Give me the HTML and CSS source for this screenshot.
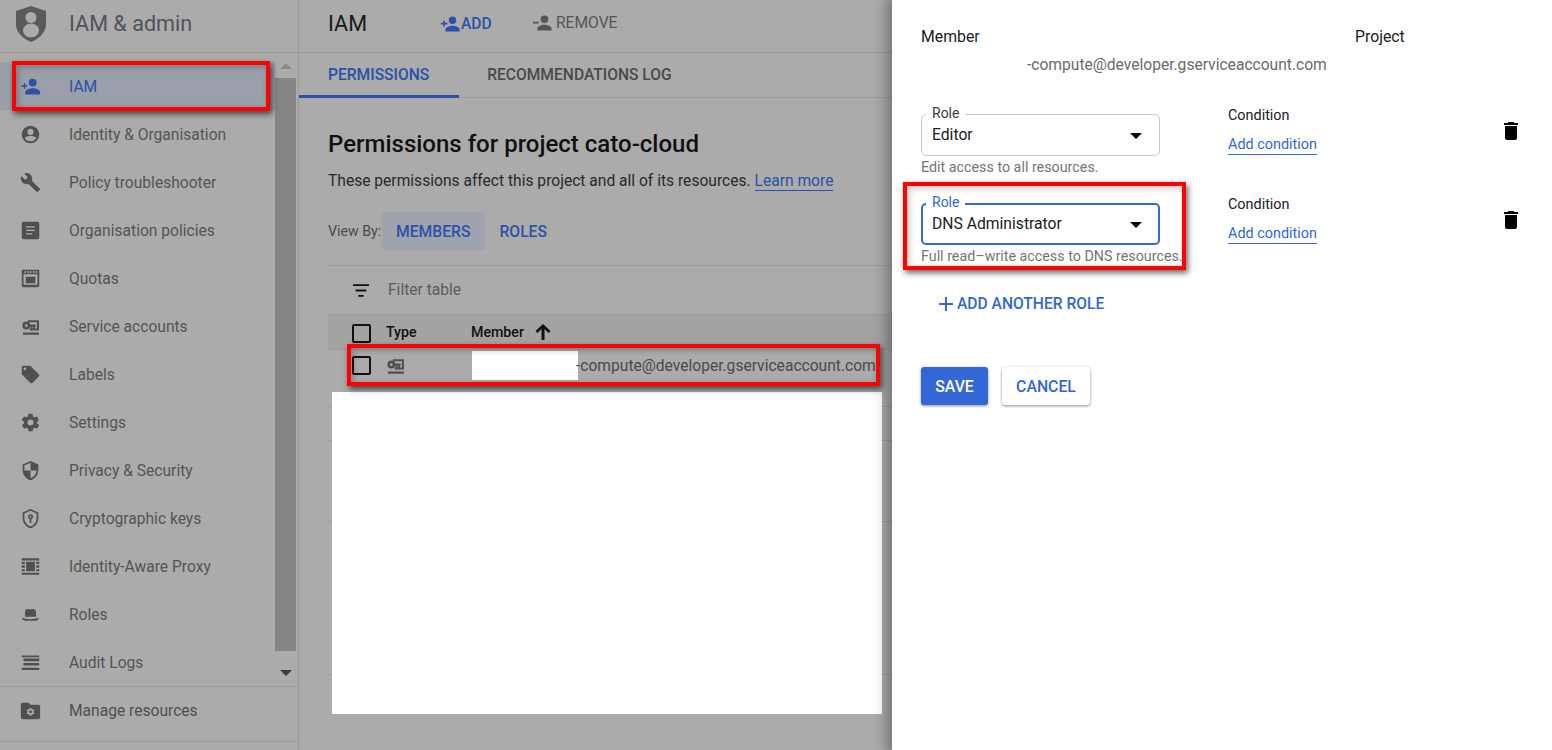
FILE: index.html
```html
<!DOCTYPE html>
<html>
<head>
<meta charset="UTF-8">
<title>IAM &amp; admin</title>
<link rel="stylesheet" href="styles.css">
</head>
<body>
<div class="app">

<!-- left nav -->
<aside class="sidebar">
	<div class="brand">
		<svg class="brand-logo" viewBox="0 0 30 36"><path fill="#5a5a5a" d="M15 0l15 5v13c0 8-6 14-15 18C6 32 0 26 0 18V5z"/><circle cx="15" cy="11.500" r="5.500" fill="#ababab"/><ellipse cx="15" cy="24.500" rx="8" ry="7" fill="#ababab"/></svg>
		<span class="brand-name">IAM &amp; admin</span>
	</div>
	<div class="nav-wrap">
		<ul class="nav">
			<li class="nav-item selected"><svg class="icon" viewBox="0 0 24 24"><path d="M14.500 12a4.500 4.500 0 1 0 0-9 4.500 4.500 0 0 0 0 9zM6 10.500V8H4.300v2.500H1.500v1.700h2.800v2.400H6v-2.400h2.300v-1.700zM14.500 14c-3 0-8.500 1.500-8.500 4.500V21h17v-2.500c0-3-5.500-4.500-8.500-4.500z"/></svg>IAM</li>
			<li class="nav-item"><svg class="icon" viewBox="0 0 24 24"><path d="M12 2a10 10 0 1 0 0 20 10 10 0 0 0 0-20zm0 3.500a3.500 3.500 0 1 1 0 7 3.500 3.500 0 0 1 0-7zm0 14.300c-2.600 0-4.900-1.300-6.300-3.300.1-2 4.200-3.100 6.300-3.100s6.200 1.100 6.300 3.100c-1.400 2-3.700 3.300-6.300 3.300z"/></svg>Identity &amp; Organisation</li>
			<li class="nav-item"><svg class="icon" viewBox="0 0 24 24"><path d="M22.700 19l-9.100-9.100c.9-2.300.4-5-1.500-6.900-2-2-5-2.400-7.400-1.300L9 6 6 9 1.600 4.700C.4 7.100.9 10.100 2.900 12.100c1.900 1.900 4.600 2.400 6.900 1.500l9.100 9.100c.4.400 1 .4 1.400 0l2.300-2.300c.5-.4.5-1.100.1-1.400z"/></svg>Policy troubleshooter</li>
			<li class="nav-item"><svg class="icon" viewBox="0 0 24 24"><path fill-rule="evenodd" d="M4 2h16a2 2 0 0 1 2 2v16a2 2 0 0 1-2 2H4a2 2 0 0 1-2-2V4a2 2 0 0 1 2-2zm3 5v1.500h10V7zm0 4v1.500h10V11zm0 4v1.500h7V15z"/></svg>Organisation policies</li>
			<li class="nav-item"><svg class="icon" viewBox="0 0 24 24"><path fill-rule="evenodd" d="M2 2h20v18a2 2 0 0 1-2 2H4a2 2 0 0 1-2-2zM4 7h16v11a1 1 0 0 1-1 1H5a1 1 0 0 1-1-1zM6.500 10h11v7.500h-11zM5 3.500h1.500V6H5zM8.500 3.500H10V6H8.500zM11.500 3.500H13V6h-1.500zM15 3.500h1.500V6H15zM18 3.500h1.500V6H18z"/></svg>Quotas</li>
			<li class="nav-item"><svg class="icon" viewBox="0 0 24 24"><path d="M7.200 6.400a4.500 4.500 0 1 1 0 9 4.500 4.500 0 1 1 0-9zM7.200 9.300a1.600 1.600 0 1 0 0 3.200 1.600 1.600 0 1 0 0-3.200zM9 4.800h12.700v11.900H11v-2.400h8.300V7.200H9zM11 9.800h7v2.400h-.8v2h-2.200v-2h-.8v2H12v-2h-1zM3.400 18.800h18.300v2.500H3.400z"/></svg>Service accounts</li>
			<li class="nav-item"><svg class="icon" viewBox="0 0 24 24"><path d="M21.400 11.600l-9-9C12 2.200 11.500 2 11 2H4a2 2 0 0 0-2 2v7c0 .6.200 1.100.6 1.400l9 9c.4.400.9.600 1.400.6s1-.2 1.400-.6l7-7c.4-.4.6-.9.600-1.400s-.2-1-.6-1.400zM5.500 7a1.500 1.500 0 1 1 0-3 1.500 1.500 0 0 1 0 3z"/></svg>Labels</li>
			<li class="nav-item"><svg class="icon" viewBox="0 0 24 24"><path d="M19.400 13c0-.3.100-.6.100-1s0-.7-.1-1l2.100-1.600c.2-.2.200-.4.100-.6l-2-3.500c-.1-.2-.4-.3-.6-.2l-2.500 1c-.5-.4-1.100-.7-1.700-1l-.4-2.600c0-.3-.2-.5-.5-.5h-4c-.3 0-.5.200-.5.400l-.4 2.700c-.6.200-1.100.6-1.700 1l-2.500-1c-.2-.1-.5 0-.6.200l-2 3.500c-.1.200-.1.400.1.600L4.600 11c0 .3-.1.700-.1 1s0 .7.100 1l-2.100 1.600c-.2.200-.2.400-.1.600l2 3.500c.1.200.4.300.6.200l2.500-1c.5.400 1.100.7 1.700 1l.4 2.600c0 .3.200.5.500.5h4c.3 0 .5-.2.500-.4l.4-2.700c.6-.2 1.100-.6 1.700-1l2.500 1c.2.100.5 0 .6-.2l2-3.500c.1-.2.100-.4-.1-.6zM12 15.500a3.500 3.500 0 1 1 0-7 3.500 3.500 0 0 1 0 7z"/></svg>Settings</li>
			<li class="nav-item"><svg class="icon" viewBox="0 0 24 24"><path d="M12 1L3 5v6c0 5.600 3.800 10.700 9 12 5.200-1.300 9-6.400 9-12V5zm0 11h7c-.5 4.100-3.300 7.800-7 8.900V12H5V6.300l7-3.100z"/></svg>Privacy &amp; Security</li>
			<li class="nav-item"><svg class="icon" viewBox="0 0 24 24"><path fill-rule="evenodd" d="M12 1L3 5v6c0 5.600 3.800 10.700 9 12 5.200-1.300 9-6.400 9-12V5zm0 2.200L19 6.300V11c0 4.500-3 8.800-7 9.900-4-1.100-7-5.400-7-9.900V6.300zM12 7a3 3 0 0 0-1 5.800V17h2v-4.200A3 3 0 0 0 12 7zm0 2a1 1 0 1 1 0 2 1 1 0 0 1 0-2z"/></svg>Cryptographic keys</li>
			<li class="nav-item"><svg class="icon" viewBox="0 0 24 24"><path d="M2 2.500h20v2.500H2zM2 6.500h3.500v2.500H2zM18.500 6.500H22v2.500h-3.500zM2 10.500h3.500v3H2zM18.500 10.500H22v3h-3.500zM2 15h3.500v2.500H2zM18.500 15H22v2.500h-3.500zM2 19h20v2.500H2zM7 6.500h10v11H7z"/></svg>Identity-Aware Proxy</li>
			<li class="nav-item"><svg class="icon" viewBox="0 0 24 24"><path d="M5.700 9c0-2.500 2-3.800 4-3.300.8.200 1.500.5 2.300.5s1.500-.3 2.300-.5c2-.5 4 .8 4 3.300v5.500H5.700zM2.500 15.500c2.500 1.300 5.500 1.800 9.500 1.800s7-.5 9.500-1.800c0 2.500-1.500 3.500-3.500 3.500H6c-2 0-3.500-1-3.500-3.500z"/></svg>Roles</li>
			<li class="nav-item"><svg class="icon" viewBox="0 0 24 24"><path d="M2 4h20v2H2zM4 7.500h18v3H4zM4 12.500h18v3H4zM2 18h20v2.500H2z"/></svg>Audit Logs</li>
		</ul>
		<div class="scrollbar">
			<span class="arrow-up"></span>
			<div class="thumb"></div>
			<span class="arrow-down"></span>
		</div>
	</div>
	<div class="manage">
		<svg class="icon" viewBox="0 0 24 24"><path d="M10 3H3a2 2 0 0 0-2 2v15a2 2 0 0 0 2 2h18a2 2 0 0 0 2-2V7.500a2 2 0 0 0-2-2H12z"/><path class="knock" transform="translate(6.700 8.200) scale(.44)" d="M19.400 13c0-.3.100-.6.100-1s0-.7-.1-1l2.100-1.600c.2-.2.200-.4.100-.6l-2-3.500c-.1-.2-.4-.3-.6-.2l-2.500 1c-.5-.4-1.100-.7-1.700-1l-.4-2.600c0-.3-.2-.5-.5-.5h-4c-.3 0-.5.200-.5.400l-.4 2.700c-.6.200-1.100.6-1.700 1l-2.500-1c-.2-.1-.5 0-.6.200l-2 3.500c-.1.200-.1.400.1.600L4.600 11c0 .3-.1.700-.1 1s0 .7.100 1l-2.100 1.600c-.2.200-.2.400-.1.600l2 3.500c.1.200.4.300.6.200l2.500-1c.5.400 1.100.7 1.700 1l.4 2.600c0 .3.200.5.500.5h4c.3 0 .5-.2.500-.4l.4-2.700c.6-.2 1.100-.6 1.700-1l2.500 1c.2.100.5 0 .6-.2l2-3.500c.1-.2.100-.4-.1-.6z"/><circle cx="12" cy="13.500" r="1.600"/></svg>Manage resources
	</div>
</aside>

<!-- project permissions -->
<main class="main">
	<div class="toolbar">
		<h1 class="page-title">IAM</h1>
		<a class="tool tool-add"><svg class="tool-icon" viewBox="0 0 24 24"><path d="M15 12a4.500 4.500 0 1 0 0-9 4.500 4.500 0 0 0 0 9zM6 10.500V8H4v2.500H1v2h3V15h2v-2.500h3v-2zM15 14c-3 0-8.500 1.500-8.500 4.500V21h17v-2.500C23.500 15.500 18 14 15 14z"/></svg>ADD</a>
		<a class="tool tool-remove"><svg class="tool-icon" viewBox="0 0 24 24"><path d="M15 12a4.500 4.500 0 1 0 0-9 4.500 4.500 0 0 0 0 9zM1 10.500h7v2H1zM15 14c-3 0-8.500 1.500-8.500 4.500V21h17v-2.500C23.500 15.500 18 14 15 14z"/></svg>REMOVE</a>
	</div>
	<div class="tabs">
		<a class="tab active">PERMISSIONS</a>
		<a class="tab">RECOMMENDATIONS LOG</a>
	</div>
	<div class="content">
		<h2 class="heading">Permissions for project cato-cloud</h2>
		<p class="intro">These permissions affect this project and all of its resources. <a class="link">Learn more</a></p>
		<div class="view-by">
			<span class="view-label">View By:</span>
			<a class="view-btn on">MEMBERS</a>
			<a class="view-btn">ROLES</a>
		</div>
		<div class="table">
			<div class="filter-row">
				<svg class="filter-icon" viewBox="0 0 18 14"><path d="M0 0h18v2H0zM3 6h12v2H3zM6 12h6v2H6z"/></svg>
				<span class="filter-text">Filter table</span>
			</div>
			<div class="table-head">
				<span class="check"></span>
				<span class="col-type">Type</span>
				<span class="col-member">Member</span>
				<svg class="sort-icon" viewBox="0 0 16 16"><path d="M6.500 16V5L2.500 9 .500 7 8 0l7.500 7-2 2-4-4v11z"/></svg>
			</div>
			<div class="table-row">
				<span class="check"></span>
				<svg class="type-icon" viewBox="0 0 24 24"><path d="M7.200 6.400a4.500 4.500 0 1 1 0 9 4.500 4.500 0 1 1 0-9zM7.200 9.300a1.600 1.600 0 1 0 0 3.200 1.600 1.600 0 1 0 0-3.200zM9 4.800h12.700v11.900H11v-2.400h8.300V7.200H9zM11 9.800h7v2.400h-.8v2h-2.200v-2h-.8v2H12v-2h-1zM3.400 18.800h18.300v2.500H3.400z"/></svg>
				<span class="member-cell"><span class="redact"></span>-compute@developer.gserviceaccount.com</span>
			</div>
			<div class="table-line line-a"></div>
			<div class="table-line line-b"></div>
			<div class="table-line line-c"></div>
			<div class="table-line line-d"></div>
		</div>
	</div>
	<div class="whiteout"></div>
</main>

<!-- edit permissions panel -->
<section class="panel">
	<div class="panel-head">
		<div class="member-col">
			<div class="panel-label">Member</div>
			<div class="member-email">-compute@developer.gserviceaccount.com</div>
		</div>
		<div class="panel-label">Project</div>
	</div>

	<div class="role-row">
		<div class="role-col">
			<div class="role-select">
				<span class="role-legend">Role</span>
				<span>Editor</span>
				<span class="caret"></span>
			</div>
			<div class="hint">Edit access to all resources.</div>
		</div>
		<div class="cond-col">
			<div class="cond-label">Condition</div>
			<a class="cond-link">Add condition</a>
		</div>
		<svg class="trash" viewBox="0 0 14 18"><path d="M1 16a2 2 0 0 0 2 2h8a2 2 0 0 0 2-2V4H1zM14 1h-3.500l-1-1h-5l-1 1H0v2h14z"/></svg>
	</div>

	<div class="role-row">
		<div class="role-col">
			<div class="role-select focused">
				<span class="role-legend">Role</span>
				<span>DNS Administrator</span>
				<span class="caret"></span>
			</div>
			<div class="hint">Full read–write access to DNS resources.</div>
		</div>
		<div class="cond-col">
			<div class="cond-label">Condition</div>
			<a class="cond-link">Add condition</a>
		</div>
		<svg class="trash" viewBox="0 0 14 18"><path d="M1 16a2 2 0 0 0 2 2h8a2 2 0 0 0 2-2V4H1zM14 1h-3.500l-1-1h-5l-1 1H0v2h14z"/></svg>
	</div>

	<a class="add-role"><svg class="plus" viewBox="0 0 14 14"><path d="M6 0h2v6h6v2H8v6H6V8H0V6h6z"/></svg>ADD ANOTHER ROLE</a>

	<div class="actions">
		<button class="btn btn-save">SAVE</button>
		<button class="btn btn-cancel">CANCEL</button>
	</div>
</section>

</div>

<!-- red callouts drawn on top of the screenshot -->
<div class="callout callout-iam"></div>
<div class="callout callout-row"></div>
<div class="callout callout-role"></div>
</body>
</html>
```

FILE: styles.css
```css
*
{
	box-sizing: border-box;
}

html, body
{
	margin: 0;
	height: 750px;
	overflow: hidden;
}

body
{
	font-family: Roboto, "Liberation Sans", sans-serif;
	font-size: 15.6px;
	color: #4a4a4a;
	background-color: #ababab;
	position: relative;
}

.app
{
	display: flex;
	height: 750px;
}

/* sidebar */

.sidebar
{
	width: 299px;
	flex-shrink: 0;
	border-right: 1px solid #999999;
	display: flex;
	flex-direction: column;
}

.brand
{
	height: 53px;
	display: flex;
	align-items: center;
	padding-left: 16px;
	padding-bottom: 5px;
	border-bottom: 1px solid #9c9c9c;
}

.brand-logo
{
	width: 30px;
	height: 36px;
}

.brand-name
{
	margin-left: 23px;
	font-size: 21.6px;
	color: #50535a;
}

.nav-wrap
{
	height: 634px;
	display: flex;
	border-bottom: 1px solid #9c9c9c;
	padding-top: 9px;
}

.nav
{
	list-style: none;
	margin: 0;
	padding: 0;
	width: 275px;
	flex-shrink: 0;
}

.nav-item, .manage
{
	height: 48px;
	display: flex;
	align-items: center;
	padding-left: 20px;
	padding-top: 1px;
	font-size: 15.6px;
	color: #555555;
}

.nav-item.selected
{
	background-color: #9a9fa9;
	color: #2b52a8;
}

.icon
{
	width: 21px;
	height: 21px;
	margin-right: 28px;
	fill: #505050;
}

.selected .icon
{
	fill: #2b52a8;
}

.icon .knock
{
	fill: #ababab;
}

.manage
{
	height: 55px;
	padding-top: 0;
	padding-bottom: 7px;
	border-bottom: 1px solid #9c9c9c;
	color: #4f4f52;
}

.scrollbar
{
	width: 21px;
	margin-top: -9px;
	display: flex;
	flex-direction: column;
	align-items: center;
}

.arrow-up
{
	margin-top: 10px;
	border-left: 6px solid transparent;
	border-right: 6px solid transparent;
	border-bottom: 6px solid #8a8a8a;
}

.thumb
{
	width: 21px;
	height: 573px;
	margin-top: 9px;
	background-color: #858585;
}

.arrow-down
{
	margin-top: 19px;
	border-left: 6px solid transparent;
	border-right: 6px solid transparent;
	border-top: 6px solid #3c3c3c;
}

/* main column */

.main
{
	width: 593px;
	flex-shrink: 0;
	position: relative;
}

.toolbar
{
	height: 53px;
	display: flex;
	align-items: center;
	padding-left: 29px;
	padding-bottom: 5px;
	border-bottom: 1px solid #9c9c9c;
}

.page-title
{
	margin: 0;
	font-size: 21.6px;
	font-weight: 400;
	color: #1a1a1a;
	width: 112px;
}

.tool
{
	display: flex;
	align-items: center;
	font-size: 15.6px;
	font-weight: 500;
}

.tool-add
{
	color: #2b52a8;
	fill: #2b52a8;
	width: 92px;
}

.tool-remove
{
	color: #555555;
	fill: #555555;
	font-weight: 400;
	margin-top: -2px;
}

.tool-icon
{
	width: 20px;
	height: 20px;
	margin-right: 1px;
}

.tool-remove .tool-icon
{
	margin-right: 4px;
}

.tabs
{
	height: 45px;
	display: flex;
	border-bottom: 1px solid #9c9c9c;
}

.tab
{
	height: 45px;
	padding: 13px 29px 0 29px;
	font-size: 15.6px;
	font-weight: 500;
	color: #4a4a4a;
}

.tab.active
{
	padding-right: 30px;
	color: #2b52a8;
	border-bottom: 3px solid #2b52a8;
}

.tab + .tab
{
	padding-left: 28px;
}

.content
{
	padding: 30px 0 0 29px;
}

.heading
{
	margin: 0;
	font-size: 24px;
	font-weight: 500;
	line-height: 32px;
	color: #111111;
}

.intro
{
	margin: 11px 0 0 0;
	font-size: 15.6px;
	line-height: 20px;
	color: #2a2a2a;
}

.link
{
	color: #2b52a8;
	border-bottom: 1px solid #2b52a8;
}

.view-by
{
	display: flex;
	align-items: center;
	margin-top: 21px;
	height: 38px;
}

.view-label
{
	font-size: 14.2px;
	color: #4a4a4a;
	width: 54px;
}

.view-btn
{
	height: 38px;
	display: flex;
	align-items: center;
	padding: 0 15px 0 14px;
	font-size: 15.7px;
	font-weight: 500;
	color: #2b52a8;
	border-radius: 2px;
}

.view-btn.on
{
	background-color: #9ea3ad;
}

.table
{
	margin-top: 15px;
	border-top: 1px solid #9c9c9c;
}

.filter-row
{
	height: 49px;
	display: flex;
	align-items: center;
	padding-left: 25px;
	border-bottom: 1px solid #9c9c9c;
}

.filter-icon
{
	width: 16px;
	height: 13px;
	fill: #111111;
}

.filter-text
{
	margin-left: 19px;
	font-size: 15.6px;
	color: #5c5c5c;
}

.table-head
{
	height: 35px;
	display: flex;
	align-items: center;
	padding-left: 24px;
	background-color: #a3a3a3;
	border-bottom: 1px solid #9c9c9c;
	font-size: 14.2px;
	font-weight: 500;
	color: #111111;
}

.check
{
	width: 19px;
	height: 19px;
	border: 2px solid #111111;
	border-radius: 2px;
	flex-shrink: 0;
}

.table-head .check
{
	margin-top: 3px;
}

.col-type
{
	margin-left: 15px;
	width: 85px;
}

.sort-icon
{
	width: 16px;
	height: 16px;
	margin-left: 11px;
	fill: #111111;
}

.table-row
{
	height: 37px;
	display: flex;
	align-items: center;
	padding-left: 24px;
	padding-bottom: 6px;
}

.type-icon
{
	width: 21px;
	height: 21px;
	margin-left: 14px;
	fill: #505050;
}

.member-cell
{
	display: flex;
	align-items: center;
	margin-left: 64px;
	font-size: 15.6px;
	color: #4a4a4a;
	white-space: nowrap;
}

.redact
{
	width: 106px;
	height: 29px;
	margin-left: 2px;
	margin-right: -2px;
	background-color: #ffffff;
}

.table-line
{
	height: 1px;
	margin-right: -10px;
	background-color: #9c9c9c;
}

.line-a { margin-top: 19px; }
.line-b { margin-top: 33px; }
.line-c { margin-top: 80px; }
.line-d { margin-top: 152px; }

.whiteout
{
	position: absolute;
	left: 33px;
	top: 392px;
	width: 550px;
	height: 322px;
	background-color: #ffffff;
}

/* right panel */

.panel
{
	flex: 1;
	background-color: #ffffff;
	box-shadow: 0 0 14px 4px rgba(0, 0, 0, 0.38);
	padding: 27px 0 0 29px;
	position: relative;
	color: #212121;
}

.panel-head
{
	display: flex;
	height: 70px;
}

.member-col
{
	width: 434px;
}

.panel-label
{
	font-size: 15.8px;
	line-height: 20px;
	color: #202124;
}

.member-email
{
	margin: 8px 0 0 106px;
	font-size: 15.6px;
	line-height: 20px;
	color: #6b6b6b;
	white-space: nowrap;
}

.role-row
{
	display: flex;
	height: 89px;
	padding-top: 17px;
}

.role-col
{
	width: 307px;
	flex-shrink: 0;
}

.role-select
{
	width: 239px;
	height: 42px;
	border: 1px solid #c9c9c9;
	border-radius: 5px;
	display: flex;
	align-items: center;
	padding-left: 10px;
	padding-bottom: 2px;
	font-size: 15.7px;
	color: #202124;
	position: relative;
}

.role-select.focused
{
	border: 2px solid #3367d6;
	padding-left: 9px;
}

.role-legend
{
	position: absolute;
	left: 4px;
	top: -10px;
	padding: 0 6px;
	background-color: #ffffff;
	font-size: 14px;
	line-height: 16px;
	color: #3c3c3c;
}

.focused .role-legend
{
	color: #3367d6;
	top: -11px;
	left: 3px;
}

.caret
{
	position: absolute;
	right: 17px;
	top: 18px;
	border-left: 6px solid transparent;
	border-right: 6px solid transparent;
	border-top: 6px solid #000000;
}

.focused .caret
{
	top: 17px;
	right: 16px;
}

.hint
{
	margin-top: 2px;
	font-size: 14.3px;
	line-height: 18px;
	color: #757575;
	white-space: nowrap;
}

.cond-col
{
	width: 276px;
	flex-shrink: 0;
}

.cond-label
{
	font-size: 14.4px;
	line-height: 20px;
	color: #202124;
	margin-top: -8px;
}

.cond-link
{
	display: inline-block;
	margin-top: 9px;
	font-size: 14.4px;
	line-height: 19px;
	color: #3367d6;
	border-bottom: 1px solid #3367d6;
}

.trash
{
	width: 14px;
	height: 18px;
	margin-top: 8px;
	fill: #000000;
}

.add-role
{
	display: flex;
	align-items: center;
	margin: 20px 0 0 18px;
	font-size: 15.6px;
	font-weight: 500;
	color: #3367d6;
}

.plus
{
	width: 14px;
	height: 14px;
	margin-right: 4px;
	fill: #3367d6;
}

.actions
{
	display: flex;
	margin-top: 54px;
}

.btn
{
	height: 38px;
	border: none;
	border-radius: 3px;
	font-family: inherit;
	font-size: 15.8px;
	font-weight: 500;
	box-shadow: 0 1px 3px rgba(0, 0, 0, 0.45);
}

.btn-save
{
	width: 67px;
	background-color: #3367d6;
	color: #ffffff;
}

.btn-cancel
{
	width: 88px;
	margin-left: 14px;
	background-color: #ffffff;
	color: #3367d6;
}

/* callouts */

.callout
{
	position: absolute;
	border: 4px solid #ff0000;
	box-shadow: 2px 3px 6px rgba(0, 0, 0, 0.6), inset 2px 2px 6px rgba(0, 0, 0, 0.25);
}

.callout-iam
{
	left: 12px;
	top: 61px;
	width: 258px;
	height: 50px;
}

.callout-row
{
	left: 347px;
	top: 344px;
	width: 533px;
	height: 42px;
}

.callout-role
{
	left: 903px;
	top: 182px;
	width: 283px;
	height: 88px;
}
```
